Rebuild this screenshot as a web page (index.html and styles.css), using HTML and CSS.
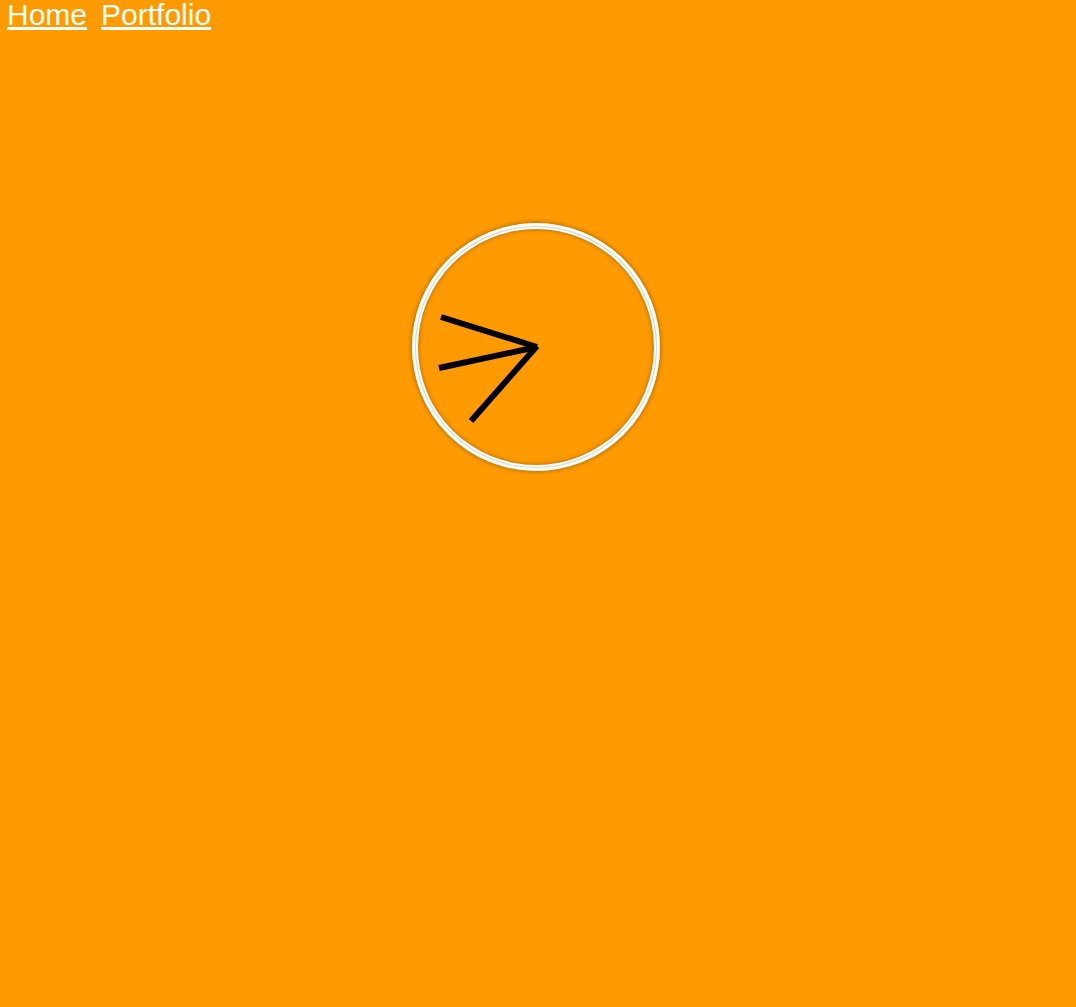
FILE: index.html
```html
<!DOCTYPE html>
<html lang="en">
<head>
<meta charset="utf-8">
<title>Clock</title>
<link rel="stylesheet" href="styles.css">
</head>
<body>
<nav class="nav">
  <a class="nav-link" href="#">Home</a>
  <a class="nav-link" href="#">Portfolio</a>
</nav>
<main class="stage">
  <div class="clock">
    <svg class="hands" width="250" height="250" viewBox="0 0 250 250">
      <line x1="126" y1="125" x2="30" y2="95" />
      <line x1="126" y1="125" x2="28" y2="146" />
      <line x1="126" y1="124" x2="60" y2="199" />
    </svg>
  </div>
</main>
</body>
</html>
```
FILE: styles.css
```css
html, body {
  margin: 0;
  padding: 0;
  height: 100%;
}
body {
  background: #ff9b00;
  font-family: "Liberation Sans", Arial, sans-serif;
  overflow: hidden;
}
.nav {
  display: flex;
  gap: 14px;
  padding-left: 7px;
  height: 32px;
  line-height: 30px;
}
.nav-link {
  color: #ffffff;
  font-size: 30px;
  text-decoration: underline;
}
.stage {
  padding-top: 191px;
}
.clock {
  position: relative;
  box-sizing: border-box;
  width: 248px;
  height: 248px;
  margin-left: calc(50% - 126px);
  border: 3px solid #ffffff;
  border-radius: 50%;
  box-shadow:
    0 0 4px 1px rgba(0, 0, 0, 0.3),
    inset 0 0 0 1px #d4d4d4,
    inset 0 0 0 3px #ffffff,
    inset 0 0 5px 3px rgba(0, 0, 0, 0.35);
}
.hands {
  position: absolute;
  top: -4px;
  left: -4px;
}
.hands line {
  stroke: #000000;
  stroke-width: 6;
  stroke-linecap: butt;
}
```
